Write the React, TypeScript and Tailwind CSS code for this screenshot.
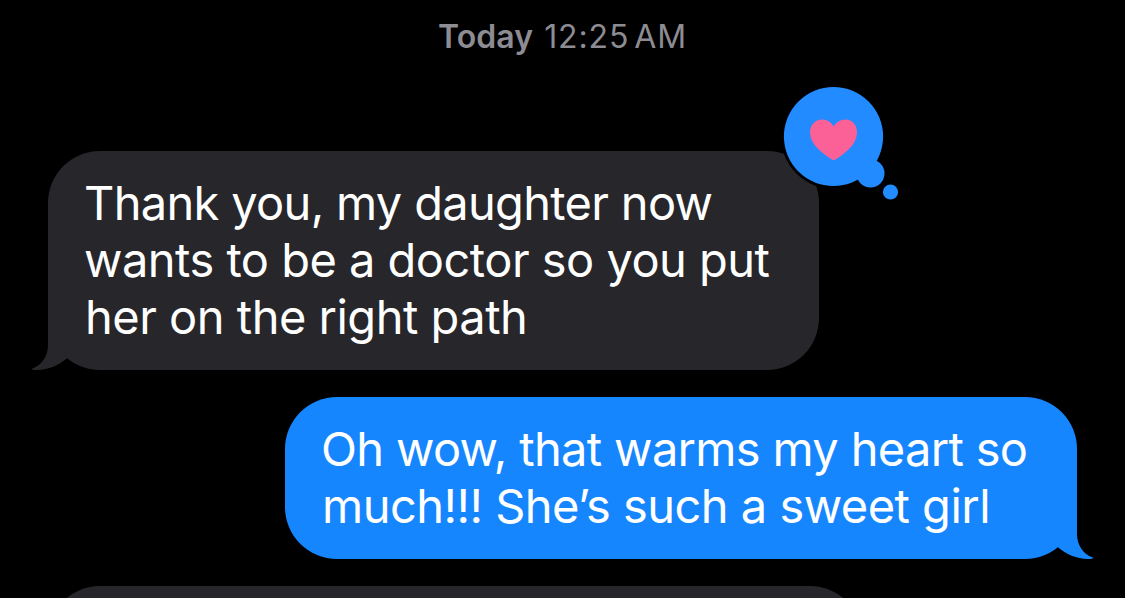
import type { ReactNode } from 'react';

function Tail({ className }: { className: string }) {
  return (
    <svg viewBox="0 0 36 60" className={`absolute h-[60px] w-9 ${className}`} fill="currentColor" aria-hidden="true">
      <path d="M16 0V35C16 46 10 55 0.3 58.5C-0.2 58.8 0 59.5 1 59.7C14 61 26 56 35 48.2L36 0Z" />
    </svg>
  );
}

function Line({ className, children }: { className: string; children: ReactNode }) {
  return <span className={`block whitespace-nowrap ${className}`}>{children}</span>;
}

function Reaction() {
  return (
    <svg
      viewBox="0 0 120 120"
      className="absolute -top-[67px] -right-[82px] h-[120px] w-[120px]"
      role="img"
      aria-label="Loved"
    >
      <circle cx="52.5" cy="52.5" r="52.5" fill="#000" />
      <g fill="#218bff">
        <circle cx="52.5" cy="52.5" r="49.6" />
        <circle cx="89.5" cy="89.5" r="14" />
        <circle cx="109.5" cy="108" r="7.6" />
      </g>
      <path
        fill="#fb6096"
        d="M52.7 76C51.5 76 50.5 75.2 49 74.2C38 67 29 58.500 29 48.500C29 41 34 35.500 41 35.500C46.500 35.500 50.500 38.500 52.700 42.500C55 38.500 59 35.500 64.500 35.500C71.500 35.500 76 41 76 48.500C76 58.500 67.500 67 56.500 74.200C55 75.200 54 76 52.700 76Z"
      />
    </svg>
  );
}

export default function App() {
  return (
    <main className="flex h-[598px] w-[1125px] flex-col overflow-hidden bg-black font-['Inter','Liberation_Sans',sans-serif] text-[47px] leading-[57px] text-white">
      <header className="flex h-[151px] shrink-0 justify-center gap-[11px] pt-[17px] text-[32px] leading-10 text-[#8d8c93]">
        <span className="font-semibold tracking-[0.1px]">Today</span>
        <span className="tracking-[0.9px] [word-spacing:-5px]">12:25 AM</span>
      </header>
      <section className="relative ml-12 h-[219px] w-[771px] shrink-0 rounded-[52px] bg-[#27262b] pt-[23px] pl-[36px]">
        <Tail className="bottom-0 -left-4 text-[#27262b]" />
        <div className="relative">
          <Line className="tracking-[-0.68px]">Thank you, my daughter now</Line>
          <Line className="tracking-[-0.52px]">wants to be a doctor so you put</Line>
          <Line className="pl-px tracking-[-0.5px]">her on the right path</Line>
        </div>
        <Reaction />
      </section>
      <section className="relative mt-[27px] mr-12 h-[162px] w-[792px] shrink-0 self-end rounded-[52px] bg-[#1686ff] pt-[23px] pl-[36px]">
        <Tail className="-right-4 bottom-0 -scale-x-100 text-[#1686ff]" />
        <div className="relative">
          <Line className="tracking-[-0.67px]">Oh wow, that warms my heart so</Line>
          <Line className="pl-px tracking-[-0.52px]">much!!! She’s such a sweet girl</Line>
        </div>
      </section>
      <section className="mt-[27px] ml-12 h-[162px] w-[814px] shrink-0 rounded-[52px] bg-[#27262b]" />
    </main>
  );
}
